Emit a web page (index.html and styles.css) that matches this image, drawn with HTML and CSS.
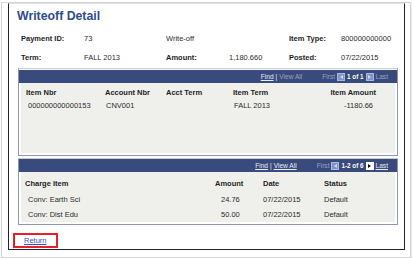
FILE: index.html
```html
<!DOCTYPE html>
<html lang="en">
<head>
    <meta charset="UTF-8">
    <meta name="viewport" content="width=device-width, initial-scale=1.0">
    <title>Writeoff Detail</title>
    <link rel="stylesheet" href="styles.css">
</head>
<body>
    <div class="shot">
        <div class="frame">
            <h1 class="page-title">Writeoff Detail</h1>

            <div class="fields">
                <span class="label">Payment ID:</span>
                <span>73</span>
                <span>Write-off</span>
                <span></span>
                <span class="label">Item Type:</span>
                <span>800000000000</span>

                <span class="label">Term:</span>
                <span>FALL 2013</span>
                <span class="label">Amount:</span>
                <span>1,180.660</span>
                <span class="label">Posted:</span>
                <span>07/22/2015</span>
            </div>

            <div class="grid grid-items">
                <div class="grid-head">
                    <a class="nav-link">Find</a>
                    <span class="sep">|</span>
                    <span class="nav-off">View All</span>
                    <span class="nav-off first">First</span>
                    <span class="arrow off"><i class="tri left"></i></span>
                    <span class="count">1 of 1</span>
                    <span class="arrow off"><i class="tri right"></i></span>
                    <span class="nav-off">Last</span>
                </div>
                <div class="grid-body">
                    <table>
                        <tr>
                            <th class="c-nbr">Item Nbr</th>
                            <th class="c-acct">Account Nbr</th>
                            <th class="c-term">Acct Term</th>
                            <th class="c-iterm">Item Term</th>
                            <th class="c-amt">Item Amount</th>
                        </tr>
                        <tr>
                            <td class="c-nbr">000000000000153</td>
                            <td class="c-acct">CNV001</td>
                            <td class="c-term"></td>
                            <td class="c-iterm">FALL 2013</td>
                            <td class="c-amt">-1180.66</td>
                        </tr>
                    </table>
                </div>
            </div>

            <div class="grid grid-charges">
                <div class="grid-head">
                    <a class="nav-link">Find</a>
                    <span class="sep">|</span>
                    <a class="nav-link">View All</a>
                    <span class="nav-off first">First</span>
                    <span class="arrow off"><i class="tri left"></i></span>
                    <span class="count">1-2 of 6</span>
                    <span class="arrow on"><i class="tri right"></i></span>
                    <a class="nav-link">Last</a>
                </div>
                <div class="grid-body">
                    <table>
                        <tr>
                            <th class="c-item">Charge Item</th>
                            <th class="c-camt">Amount</th>
                            <th class="c-date">Date</th>
                            <th class="c-status">Status</th>
                        </tr>
                        <tr>
                            <td class="c-item">Conv: Earth Sci</td>
                            <td class="c-camt">24.76</td>
                            <td class="c-date">07/22/2015</td>
                            <td class="c-status">Default</td>
                        </tr>
                        <tr>
                            <td class="c-item">Conv: Dist Edu</td>
                            <td class="c-camt">50.00</td>
                            <td class="c-date">07/22/2015</td>
                            <td class="c-status">Default</td>
                        </tr>
                    </table>
                </div>
            </div>

            <div class="return-box">
                <a class="return-link">Return</a>
            </div>
        </div>
    </div>
</body>
</html>
```

FILE: styles.css
```css
body {
  margin: 0;
  background-color: #ffffff;
  font-family: "Liberation Sans", Arial, sans-serif;
  color: #2b2b2b;
}

/* outer screenshot frame */
.shot {
  margin: 2px 0 0 1px;
  width: 410px;
  height: 256px;
  box-sizing: border-box;
  border: 1px solid #d4d4d4;
  box-shadow: 1px 1px 2px rgba(0,0,0,0.12);
  padding: 0 5px 7px 6px;
}

.frame {
  height: 100%;
  box-sizing: border-box;
  border: 1px solid #222;
  border-top: 1px solid #e2e2e2;
  padding: 4px 6px 0 9px;
}

.page-title {
  margin: 0 0 0 -1px;
  font-size: 12.3px;
  line-height: 16px;
  font-weight: bold;
  color: #2d4d8a;
}

.fields {
  display: grid;
  grid-template-columns: 63px 82px 63px 60px 52px auto;
  grid-auto-rows: 19px;
  align-items: center;
  margin: 5px 0 0 3px;
  font-size: 7.5px;
}

.label {
  font-weight: bold;
  color: #1e1e1e;
}

/* grids */
.grid {
  border: 1px solid #8e97ba;
  border-top-color: #c9cdd9;
}

.grid-items {
  margin-top: 1px;
}

.grid-charges {
  margin-top: 2px;
}

.grid-head {
  height: 13px;
  margin-top: 1px;
  background-color: #394a7c;
  display: flex;
  justify-content: flex-end;
  align-items: center;
  gap: 2px;
  padding-right: 9px;
  font-size: 6.6px;
  color: #9aa3c3;
}

.grid-charges .grid-head {
  margin-top: 0;
}

.nav-link {
  color: #e8ecf6;
  text-decoration: underline;
}

.sep {
  color: #e8ecf6;
}

.first {
  margin-left: 18px;
}

.count {
  color: #fff;
  font-weight: bold;
  font-size: 6.3px;
}

.arrow {
  width: 8px;
  height: 8px;
  display: flex;
  align-items: center;
  justify-content: center;
  box-sizing: border-box;
}

.arrow.off {
  background-color: #7f95c7;
  border: 1px solid #a9b8dc;
}

.arrow.on {
  background-color: #ffffff;
}

.tri {
  width: 0;
  height: 0;
  border-top: 2px solid transparent;
  border-bottom: 2px solid transparent;
}

.tri.left {
  border-right: 3px solid #cfd8ef;
}

.tri.right {
  border-left: 3px solid #cfd8ef;
}

.arrow.on .tri.right {
  border-left-color: #111;
}

.grid-body {
  background-color: #eff0eb;
  border: 2px solid #fff;
  border-top: 0;
}

table {
  border-collapse: collapse;
  width: 100%;
  font-size: 7.5px;
}

th, td {
  padding: 0;
  text-align: left;
  white-space: nowrap;
}

th {
  font-weight: bold;
  color: #1e1e1e;
}

.grid-items .grid-body {
  height: 70px;
}

.grid-items th {
  height: 18px;
}

.grid-items td {
  height: 9px;
}

.c-nbr { width: 79px; padding-left: 5px; }
td.c-nbr { padding-left: 7px; width: 77px; }
.c-acct { width: 61px; }
td.c-acct { padding-left: 1px; width: 60px; }
.c-term { width: 67px; }
td.c-iterm { padding-left: 1px; }
.c-amt { text-align: right; padding-right: 19px; }
td.c-amt { padding-right: 22px; }

.grid-charges th {
  height: 18px;
  padding-top: 2px;
}

.grid-charges td {
  height: 15px;
}

.c-item { width: 190px; padding-left: 4px; }
td.c-item { padding-left: 7px; width: 187px; }
.c-camt { width: 48px; }
td.c-camt { padding-left: 6px; width: 42px; }
.c-date { width: 61px; }

/* return link */
.return-box {
  margin: 8px 0 0 -5px;
  width: 32px;
  height: 11px;
  border: 2px solid #e8202a;
  display: flex;
  align-items: center;
  padding-left: 9px;
}

.return-link {
  font-size: 7.5px;
  color: #3b4fc4;
  text-decoration: underline;
}
```
